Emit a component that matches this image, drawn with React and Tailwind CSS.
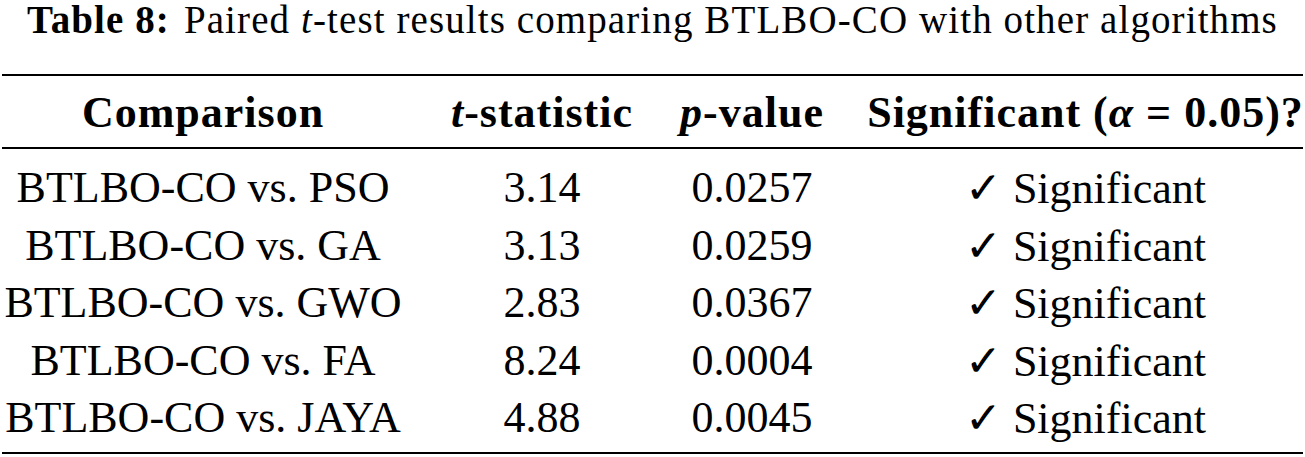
const rows = [
    { name: 'BTLBO-CO vs. PSO', t: '3.14', p: '0.0257' },
    { name: 'BTLBO-CO vs. GA', t: '3.13', p: '0.0259' },
    { name: 'BTLBO-CO vs. GWO', t: '2.83', p: '0.0367' },
    { name: 'BTLBO-CO vs. FA', t: '8.24', p: '0.0004' },
    { name: 'BTLBO-CO vs. JAYA', t: '4.88', p: '0.0045' },
];

const grid = 'grid grid-cols-[406px_272px_148px_1fr] h-[57.5px] leading-[57.5px] text-center whitespace-nowrap';

const App = () => {
    return (
        <div className="w-[1305px] h-[457px] bg-white text-black font-['Liberation_Serif',serif] overflow-hidden">
            {/* Caption */}
            <div className="-mt-[2px] text-center text-[39px] leading-[43px] tracking-[1.1px] whitespace-nowrap font-['Liberation_Serif',serif]">
                <span className="font-bold">Table 8:</span>
                <span className="ml-[14px]">Paired <i>t</i>-test results comparing BTLBO-CO with other algorithms</span>
            </div>

            {/* Table */}
            <div className="mt-[33px] text-[44px]">
                <div className="mx-[2px] h-[2px] bg-black" />
                <div className="pt-[8.4px] pb-[5.1px] font-bold tracking-[1px]">
                    <div className={grid}>
                        <div>Comparison</div>
                        <div><i>t</i>-statistic</div>
                        <div><i>p</i>-value</div>
                        <div className="pl-[40px]">Significant (<i>α</i> = 0.05)?</div>
                    </div>
                </div>
                <div className="mx-[2px] h-[2px] bg-black" />
                <div className="pt-[10.4px] pb-[5.1px]">
                    {rows.map((r) => (
                        <div key={r.name} className={grid}>
                            <div>{r.name}</div>
                            <div>{r.t}</div>
                            <div>{r.p}</div>
                            <div className="pl-[40px]">
                                <span className="font-['DejaVu_Sans',sans-serif] font-bold text-[44px]">✓</span> Significant
                            </div>
                        </div>
                    ))}
                </div>
                <div className="mx-[2px] h-[2px] bg-black" />
            </div>
        </div>
    );
};

export default App;
